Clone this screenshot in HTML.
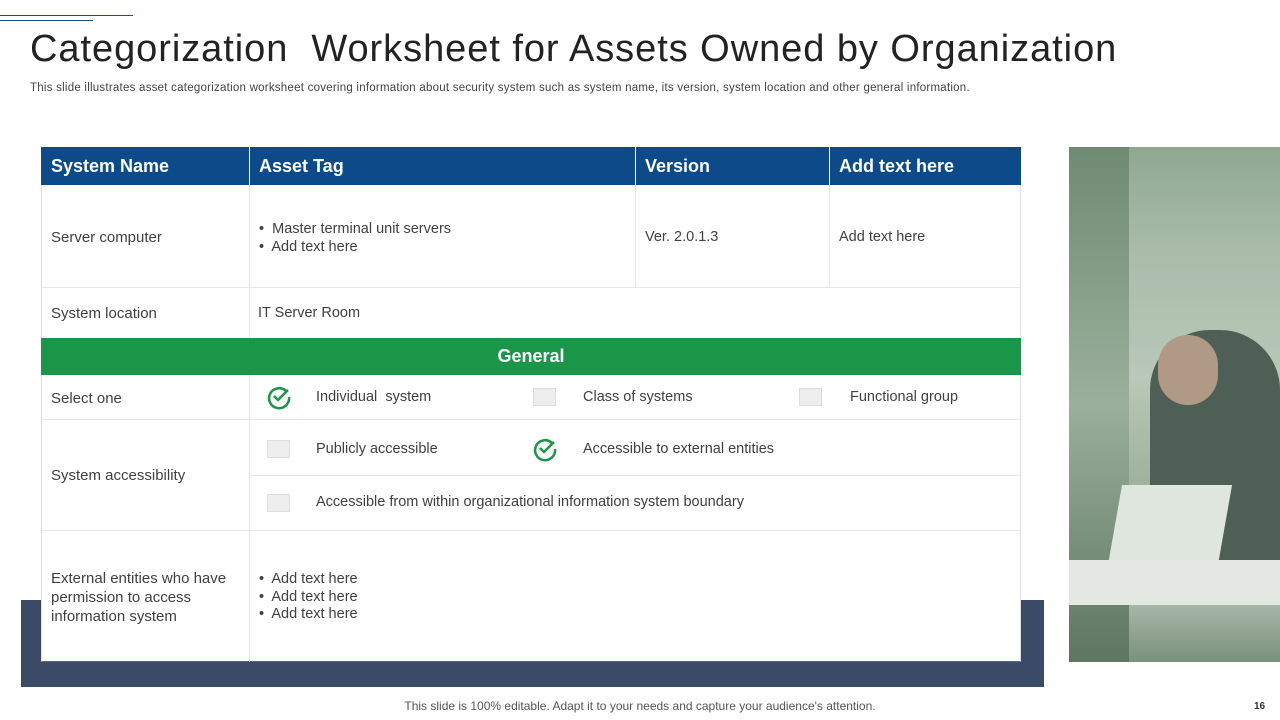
<!DOCTYPE html>
<html><head><style>
*{margin:0;padding:0;box-sizing:border-box}
body{width:1280px;height:720px;position:relative;background:#fff;font-family:"Liberation Sans",sans-serif;overflow:hidden;color:#404040}
.a{position:absolute}
.t{font-size:15px;color:#404040}
.s{font-size:14.5px;color:#404040}
.h{font-size:18px;font-weight:bold;color:#fff}
.cb{position:absolute;width:23px;height:18px;background:#eee;border:1px solid #ddd}
.line{position:absolute;background:#e8e8e8}
</style></head><body>
<div class="a" style="left:0;top:15px;width:133px;height:1px;background:#1f4e79"></div>
<div class="a" style="left:0;top:20px;width:93px;height:1px;background:#1f4e79"></div>
<div class="a" style="left:30px;top:28px;font-size:38px;color:#222;letter-spacing:0.95px">Categorization&nbsp; Worksheet for Assets Owned by Organization</div>
<div class="a" style="left:30px;top:82px;font-size:11.5px;color:#444;letter-spacing:0.24px">This slide illustrates asset categorization worksheet covering information about security system such as system name, its version, system location and other general information.</div>

<div class="a" style="left:21px;top:600px;width:1023px;height:87px;background:#3b4a66"></div>
<div class="a" style="left:41px;top:147px;width:980px;height:515px;background:#fff;border:1px solid #ddd;border-bottom:1px solid #1a9648"></div>
<div class="a" style="left:41px;top:147px;width:980px;height:38px;background:#0c4a8a"></div>
<div class="a" style="left:249px;top:147px;width:1px;height:38px;background:#fff"></div>
<div class="a" style="left:635px;top:147px;width:1px;height:38px;background:#fff"></div>
<div class="a" style="left:829px;top:147px;width:1px;height:38px;background:#fff"></div>
<div class="a h" style="left:51px;top:156px">System Name</div>
<div class="a h" style="left:259px;top:156px">Asset Tag</div>
<div class="a h" style="left:645px;top:156px">Version</div>
<div class="a h" style="left:839px;top:156px">Add text here</div>

<div class="line" style="left:249px;top:185px;width:1px;height:153px"></div>
<div class="line" style="left:249px;top:375px;width:1px;height:287px"></div>
<div class="line" style="left:635px;top:185px;width:1px;height:102px"></div>
<div class="line" style="left:829px;top:185px;width:1px;height:102px"></div>
<div class="line" style="left:41px;top:287px;width:980px;height:1px"></div>
<div class="line" style="left:41px;top:419px;width:980px;height:1px"></div>
<div class="line" style="left:249px;top:475px;width:772px;height:1px"></div>
<div class="line" style="left:41px;top:530px;width:980px;height:1px"></div>

<div class="a t" style="left:51px;top:229px">Server computer</div>
<div class="a s" style="left:259px;top:220px;line-height:18px">•&nbsp; Master terminal unit servers<br>•&nbsp; Add text here</div>
<div class="a s" style="left:645px;top:229px">Ver. 2.0.1.3</div>
<div class="a s" style="left:839px;top:229px">Add text here</div>
<div class="a t" style="left:51px;top:305px">System location</div>
<div class="a s" style="left:258px;top:305px">IT Server Room</div>

<div class="a" style="left:41px;top:338px;width:980px;height:37px;background:#1a9648"></div>
<div class="a h" style="left:41px;top:346px;width:980px;text-align:center">General</div>

<div class="a t" style="left:51px;top:390px">Select one</div>
<svg class="a" style="left:266px;top:384px" width="26" height="26" viewBox="0 0 26 26"><path d="M20 7A10 10 0 1 0 23 13" fill="none" stroke="#1a9648" stroke-width="2.5"/><path d="M8 12l4 4 10-10" fill="none" stroke="#1a9648" stroke-width="2.5"/></svg>
<div class="a s" style="left:316px;top:389px">Individual&nbsp; system</div>
<div class="cb" style="left:533px;top:388px"></div>
<div class="a s" style="left:583px;top:389px">Class of systems</div>
<div class="cb" style="left:799px;top:388px"></div>
<div class="a s" style="left:850px;top:389px">Functional group</div>

<div class="a t" style="left:51px;top:467px">System accessibility</div>
<div class="cb" style="left:267px;top:440px"></div>
<div class="a s" style="left:316px;top:441px">Publicly accessible</div>
<svg class="a" style="left:532px;top:436px" width="26" height="26" viewBox="0 0 26 26"><path d="M20 7A10 10 0 1 0 23 13" fill="none" stroke="#1a9648" stroke-width="2.5"/><path d="M8 12l4 4 10-10" fill="none" stroke="#1a9648" stroke-width="2.5"/></svg>
<div class="a s" style="left:583px;top:441px">Accessible to external entities</div>
<div class="cb" style="left:267px;top:494px"></div>
<div class="a s" style="left:316px;top:494px">Accessible from within organizational information system boundary</div>

<div class="a t" style="left:51px;top:569px;line-height:19px">External entities who have<br>permission to access<br>information system</div>
<div class="a s" style="left:259px;top:571px;line-height:17.5px">•&nbsp; Add text here<br>•&nbsp; Add text here<br>•&nbsp; Add text here</div>

<div class="a" style="left:1069px;top:147px;width:211px;height:515px;background:linear-gradient(180deg,#8fa892 0%,#a9bcaa 20%,#b9c8b8 45%,#9fb29f 65%,#c9d5c8 80%,#7b917d 100%)"></div>
<div class="a" style="left:1069px;top:147px;width:60px;height:515px;background:linear-gradient(180deg,#6f8a73,#9bb09c 50%,#5d7561)"></div>
<div class="a" style="left:1150px;top:330px;width:130px;height:260px;border-radius:60px 60px 10px 10px;background:#4e5f55"></div>
<div class="a" style="left:1158px;top:335px;width:60px;height:70px;border-radius:30px;background:#b09a86"></div>
<div class="a" style="left:1115px;top:485px;width:110px;height:80px;background:#dfe6de;transform:skewX(-10deg)"></div>
<div class="a" style="left:1069px;top:560px;width:211px;height:45px;background:#e3e9e2"></div>

<div class="a" style="left:0;top:699px;width:1280px;text-align:center;font-size:12px;color:#555">This slide is 100% editable. Adapt it to your needs and capture your audience's attention.</div>
<div class="a" style="left:1254px;top:701px;font-size:10px;font-weight:bold;color:#333">16</div>
</body></html>
